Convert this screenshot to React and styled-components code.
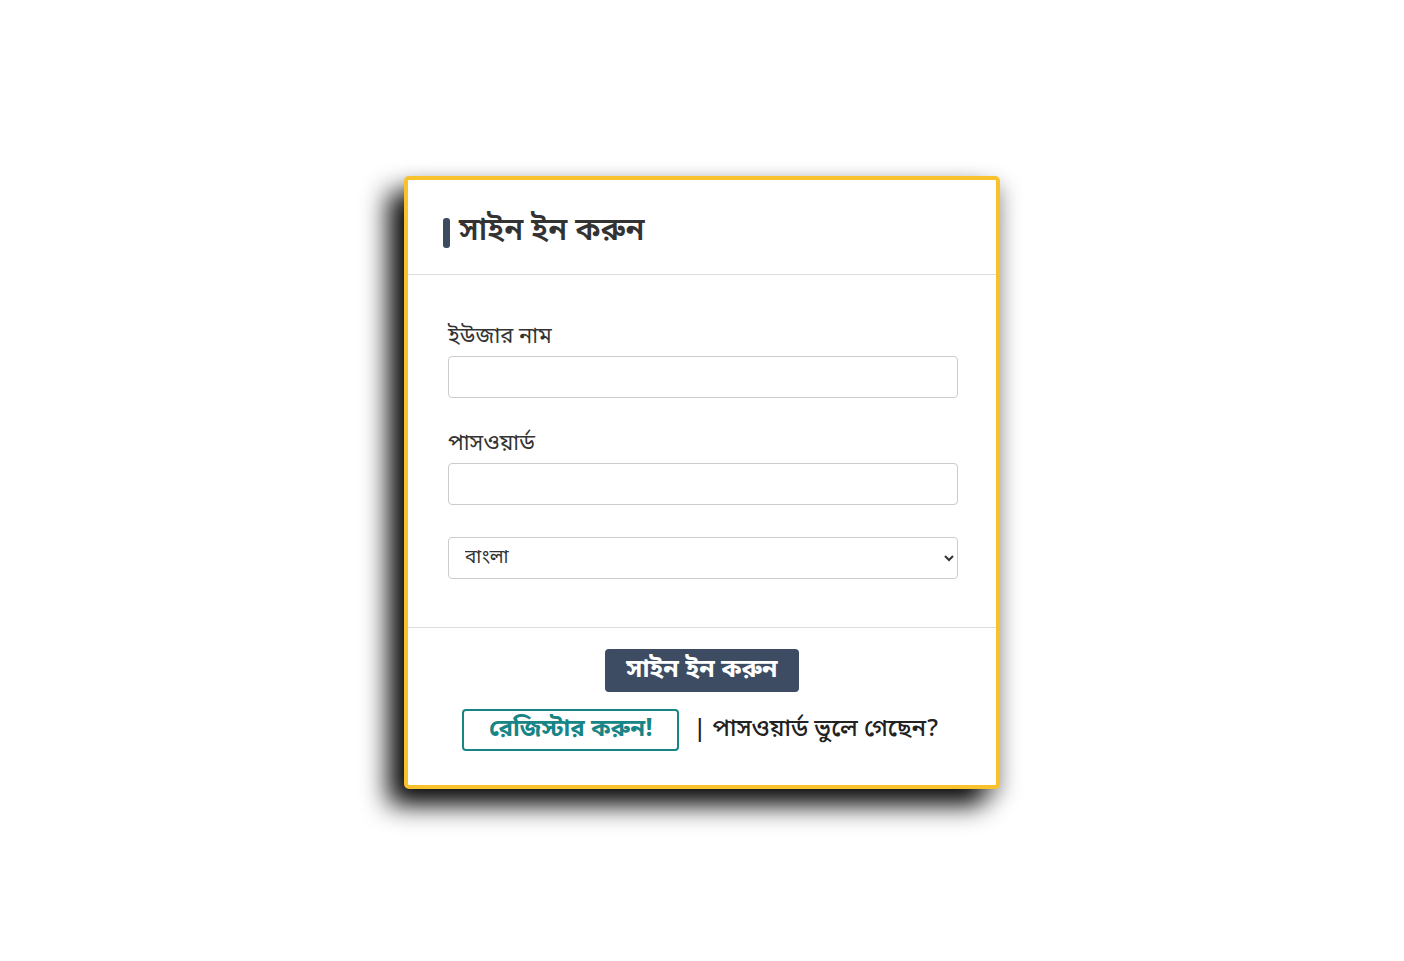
import React from 'react';
import styled, { createGlobalStyle } from 'styled-components';

const GlobalStyle = createGlobalStyle`
  html, body {
    margin: 0;
    padding: 0;
    background: #ffffff;
  }
  body {
    font-family: "Noto Sans Bengali", "Noto Sans", "Liberation Sans", sans-serif;
    color: #333333;
  }
`;

const Page = styled.div`
  width: 1404px;
  height: 961px;
  display: flex;
  justify-content: center;
  padding-top: 176px;
  box-sizing: border-box;
`;

const Card = styled.div`
  width: 596px;
  height: 613px;
  box-sizing: border-box;
  border: 4px solid #f8c22c;
  border-radius: 5px;
  background: #ffffff;
  box-shadow: -16px 16px 26px rgba(0, 0, 0, 0.95), 4px 8px 20px rgba(0, 0, 0, 0.25);
  display: flex;
  flex-direction: column;
`;

const Header = styled.div`
  height: 95px;
  box-sizing: border-box;
  border-bottom: 1px solid #dddddd;
  display: flex;
  align-items: center;
  padding: 11px 35px 0;
`;

const Title = styled.h1`
  margin: 0;
  font-size: 31px;
  font-weight: 600;
  color: #333333;
  display: flex;
  align-items: center;
  gap: 9px;
  &::before {
    content: '';
    width: 7px;
    height: 30px;
    border-radius: 3px;
    background: #3d4b60;
  }
`;

const Body = styled.div`
  padding: 48px 38px 48px 40px;
  border-bottom: 1px solid #dddddd;
  display: flex;
  flex-direction: column;
`;

const Field = styled.div`
  display: flex;
  flex-direction: column;
  margin-bottom: ${(p) => p.gap || 22}px;
`;

const Label = styled.label`
  font-size: 22px;
  line-height: 30px;
  margin-bottom: 3px;
  color: #333333;
`;

const Input = styled.input`
  height: 42px;
  box-sizing: border-box;
  border: 1px solid #cccccc;
  border-radius: 4px;
  font-size: 18px;
  padding: 0 14px;
`;

const Select = styled.select`
  height: 42px;
  box-sizing: border-box;
  border: 1px solid #cccccc;
  border-radius: 4px;
  font-family: inherit;
  font-size: 19px;
  color: #333333;
  padding: 0 12px;
  background: #ffffff;
`;

const Footer = styled.div`
  flex: 1;
  display: flex;
  flex-direction: column;
  align-items: center;
  padding-top: 21px;
  gap: 17px;
`;

const PrimaryButton = styled.button`
  width: 194px;
  height: 43px;
  border: none;
  border-radius: 4px;
  background: #3d4c62;
  color: #ffffff;
  font-family: inherit;
  font-size: 25px;
  font-weight: 700;
  line-height: 1;
  padding: 0;
`;

const Links = styled.div`
  display: flex;
  align-items: center;
  gap: 14px;
  margin-left: -3px;
`;

const OutlineButton = styled.button`
  width: 217px;
  height: 42px;
  box-sizing: border-box;
  border: 2px solid #178586;
  border-radius: 4px;
  background: #ffffff;
  color: #178586;
  font-family: inherit;
  font-size: 24px;
  font-weight: 700;
  line-height: 1;
  padding: 0;
`;

const Forgot = styled.span`
  font-size: 24px;
  font-weight: 500;
  color: #222222;
`;

export default function App() {
  return (
    <>
      <GlobalStyle />
      <Page>
        <Card>
          <Header>
            <Title>সাইন ইন করুন</Title>
          </Header>
          <Body>
            <Field gap={32}>
              <Label>ইউজার নাম</Label>
              <Input type="text" />
            </Field>
            <Field gap={32}>
              <Label>পাসওয়ার্ড</Label>
              <Input type="password" />
            </Field>
            <Select defaultValue="bn">
              <option value="bn">বাংলা</option>
              <option value="en">English</option>
            </Select>
          </Body>
          <Footer>
            <PrimaryButton>সাইন ইন করুন</PrimaryButton>
            <Links>
              <OutlineButton>রেজিস্টার করুন!</OutlineButton>
              <Forgot>| পাসওয়ার্ড ভুলে গেছেন?</Forgot>
            </Links>
          </Footer>
        </Card>
      </Page>
    </>
  );
}
